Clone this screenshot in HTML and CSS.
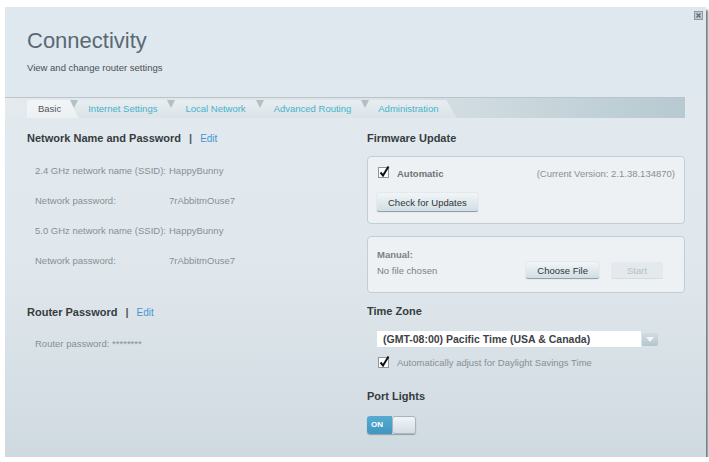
FILE: index.html
```html
<!DOCTYPE html>
<html lang="en">
<head>
    <meta charset="UTF-8">
    <meta name="viewport" content="width=device-width, initial-scale=1.0">
    <title>Connectivity</title>
    <link rel="stylesheet" href="styles.css">
</head>
<body>
    <div class="window">
        <div class="header">
            <span class="close">
                <svg width="9" height="9" viewBox="0 0 9 9">
                    <rect x="0.5" y="0.5" width="8" height="8" fill="#c3cbd0" stroke="#8e989e"/>
                    <path d="M2.5 2.5 L6.5 6.5 M6.5 2.5 L2.5 6.5" stroke="#5f686d" stroke-width="1.3"/>
                </svg>
            </span>
            <h1>Connectivity</h1>
            <p class="subtitle">View and change router settings</p>
        </div>

        <div class="tabbar">
            <div class="tab active">Basic</div>
            <div class="tab">Internet Settings</div>
            <div class="tab">Local Network</div>
            <div class="tab">Advanced Routing</div>
            <div class="tab last">Administration</div>
        </div>

        <div class="content">
            <div class="col">
                <h2>Network Name and Password<span class="sep">|</span><a class="edit">Edit</a></h2>
                <div class="rows">
                    <div class="row"><span class="label">2.4 GHz network name (SSID):</span><span>HappyBunny</span></div>
                    <div class="row"><span class="label">Network password:</span><span>7rAbbitmOuse7</span></div>
                    <div class="row"><span class="label">5.0 GHz network name (SSID):</span><span>HappyBunny</span></div>
                    <div class="row"><span class="label">Network password:</span><span>7rAbbitmOuse7</span></div>
                </div>

                <h2 class="router-head">Router Password<span class="sep">|</span><a class="edit">Edit</a></h2>
                <div class="rows">
                    <div class="row">Router password: ********</div>
                </div>
            </div>

            <div class="col">
                <h2>Firmware Update</h2>
                <div class="box auto-box">
                    <div class="auto-row">
                        <label class="check strong">
                            <svg class="checkbox" width="12" height="13" viewBox="0 0 12 13">
                                <rect x="0.5" y="2.5" width="10" height="10" fill="#fff" stroke="#8d979c"/>
                                <path d="M2.5 7.5 L5 10.5 L10.5 1.5" fill="none" stroke="#111" stroke-width="2"/>
                            </svg>
                            Automatic
                        </label>
                        <span class="version">(Current Version: 2.1.38.134870)</span>
                    </div>
                    <button class="btn big">Check for Updates</button>
                </div>

                <div class="box manual-box">
                    <div class="manual-title">Manual:</div>
                    <div class="manual-row">
                        <span class="nofile">No file chosen</span>
                        <button class="btn">Choose File</button>
                        <button class="btn disabled">Start</button>
                    </div>
                </div>

                <h2 class="tz-head">Time Zone</h2>
                <div class="select">
                    <span class="select-value">(GMT-08:00) Pacific Time (USA &amp; Canada)</span>
                    <span class="arrow">
                        <svg width="8" height="5" viewBox="0 0 8 5"><path d="M0 0 L8 0 L4 5 Z" fill="#f3f6f8"/></svg>
                    </span>
                </div>
                <label class="check dst">
                    <svg class="checkbox" width="12" height="13" viewBox="0 0 12 13">
                        <rect x="0.5" y="2.5" width="10" height="10" fill="#fff" stroke="#8d979c"/>
                        <path d="M2.5 7.5 L5 10.5 L10.5 1.5" fill="none" stroke="#111" stroke-width="2"/>
                    </svg>
                    Automatically adjust for Daylight Savings Time
                </label>

                <h2 class="lights-head">Port Lights</h2>
                <div class="toggle">
                    <span class="on">ON</span>
                    <span class="knob"></span>
                </div>
            </div>
        </div>
    </div>
</body>
</html>
```

FILE: styles.css
```css
body {
    margin: 0;
    background-color: #fff;
    font-family: "Liberation Sans", Arial, sans-serif;
}

.window {
    position: relative;
    margin: 7px 0 0 5px;
    width: 701px;
    height: 450px;
    background: linear-gradient(#e3eaef, #e1e8ed 55%, #cfdae0);
    box-shadow: 2px 3px 2px rgba(70, 76, 80, 0.75);
}

/* header */
.header {
    height: 90px;
    box-sizing: border-box;
    padding: 21px 22px 0;
    background-color: #dfe8ef;
}

.close {
    position: absolute;
    top: 4px;
    right: 3px;
    line-height: 0;
}

h1 {
    margin: 0;
    font-size: 22px;
    line-height: 25px;
    font-weight: normal;
    color: #5a6973;
}

.subtitle {
    margin: 9px 0 0;
    font-size: 9.5px;
    line-height: 12px;
    color: #4a4f53;
}

/* tabs */
.tabbar {
    display: flex;
    align-items: flex-end;
    height: 21px;
    box-sizing: border-box;
    margin-right: 21px;
    padding-left: 22px;
    border-top: 1px solid #bac4c9;
    background: linear-gradient(to right, #e4eaed 0%, #dae3e7 55%, #b7c9d1 100%);
}

.tab {
    position: relative;
    height: 18px;
    line-height: 18px;
    padding: 0 14px;
    font-size: 9.5px;
    color: #45b3cb;
    background: linear-gradient(#e7edf0, #dce4e8);
    border-top-left-radius: 3px;
}

.tab::before {
    content: "";
    position: absolute;
    top: 0;
    left: -4px;
    z-index: 2;
    border-left: 4px solid transparent;
    border-right: 4px solid transparent;
    border-top: 8px solid #b3c0c6;
}

.tab.active {
    z-index: 1;
    margin-right: -4px;
    padding: 0 17px 0 11px;
    color: #555;
    background: linear-gradient(#f2f5f7, #ecf1f4);
    clip-path: polygon(0 0, calc(100% - 8px) 0, 100% 100%, 0 100%);
}

.tab.active::before {
    display: none;
}

.tab.last {
    padding: 0 18px 0 13px;
    clip-path: polygon(-10px 0, calc(100% - 10px) 0, 100% 100%, -10px 100%);
}

/* content */
.content {
    display: grid;
    grid-template-columns: 340px 318px;
    padding: 13px 0 0 22px;
}

h2 {
    margin: 0;
    font-size: 11px;
    line-height: 14px;
    font-weight: bold;
    color: #363c40;
}

.sep {
    margin: 0 8px;
    color: #50585d;
}

.edit {
    font-size: 10px;
    font-weight: normal;
    color: #4796d2;
}

.rows {
    margin-top: 10px;
}

.row {
    height: 30px;
    line-height: 30px;
    padding-left: 8px;
    font-size: 9.5px;
    color: #898f93;
}

.label {
    display: inline-block;
    width: 134px;
}

.router-head {
    margin-top: 29px;
}

.rows + .router-head + .rows {
    margin-top: 9px;
}

/* firmware boxes */
.box {
    margin-top: 11px;
    border: 1px solid #c4cdd2;
    border-radius: 4px;
    background-color: #edf1f4;
}

.auto-box {
    height: 68px;
    box-sizing: border-box;
    padding: 9px 9px 0 10px;
}

.auto-row {
    display: flex;
    justify-content: space-between;
    align-items: center;
    height: 14px;
}

.check {
    display: flex;
    align-items: center;
    font-size: 9.5px;
    color: #898f93;
}

.check.strong {
    font-weight: bold;
    color: #6e7478;
}

.checkbox {
    margin-right: 7px;
    margin-top: -3px;
}

.version {
    font-size: 9.5px;
    color: #898f93;
}

.btn {
    height: 17px;
    padding: 0 11px;
    font-family: "Liberation Sans", Arial, sans-serif;
    font-size: 9.5px;
    color: #2f3438;
    border: none;
    border-bottom: 1px solid #8fa3ad;
    border-radius: 2px;
    background: linear-gradient(#f1f5f7, #d2dee4);
    box-shadow: 0 0 1px rgba(90, 110, 120, 0.5);
}

.btn.big {
    height: 19px;
    margin: 13px 0 0 -1px;
}

.manual-box {
    height: 57px;
    box-sizing: border-box;
    margin-top: 12px;
    padding: 12px 21px 0 9px;
}

.manual-title {
    font-size: 9.5px;
    line-height: 12px;
    font-weight: bold;
    color: #7b8185;
}

.manual-row {
    display: flex;
    align-items: center;
    gap: 12px;
    margin-top: 1px;
}

.nofile {
    flex: 1;
    font-size: 9.5px;
    color: #7b8185;
}

.btn.disabled {
    width: 52px;
    color: #b8c0c4;
    border-bottom-color: #d6dde1;
    background: #e3e9ec;
    box-shadow: none;
}

/* time zone */
.tz-head {
    margin-top: 11px;
}

.select {
    display: flex;
    align-items: center;
    margin: 13px 0 0 10px;
    width: 281px;
}

.select-value {
    flex: 1;
    height: 16px;
    line-height: 16px;
    padding-left: 6px;
    font-size: 10.5px;
    font-weight: bold;
    color: #3d4246;
    background-color: #fff;
    border-bottom: 1px solid #d8e0e4;
}

.arrow {
    display: flex;
    align-items: center;
    justify-content: center;
    width: 16px;
    height: 13px;
    margin-left: 1px;
    border-radius: 2px;
    background: linear-gradient(#d0dde3, #b3c5ce);
}

.dst {
    margin: 9px 0 0 11px;
    line-height: 12px;
}

.dst .checkbox {
    margin-right: 7px;
}

.lights-head {
    margin-top: 20px;
}

.toggle {
    display: flex;
    width: 49px;
    height: 18px;
    margin-top: 13px;
    border-radius: 3px;
    overflow: hidden;
    box-shadow: 0 1px 1px rgba(80, 100, 110, 0.5);
}

.on {
    width: 25px;
    line-height: 18px;
    padding-left: 4px;
    box-sizing: border-box;
    font-size: 8px;
    font-weight: bold;
    color: #fff;
    background: linear-gradient(#58abd0, #3f96bf);
}

.knob {
    flex: 1;
    border: 1px solid #a6b6be;
    border-radius: 3px;
    background: linear-gradient(#f1f5f7, #d3dee4);
}
```
